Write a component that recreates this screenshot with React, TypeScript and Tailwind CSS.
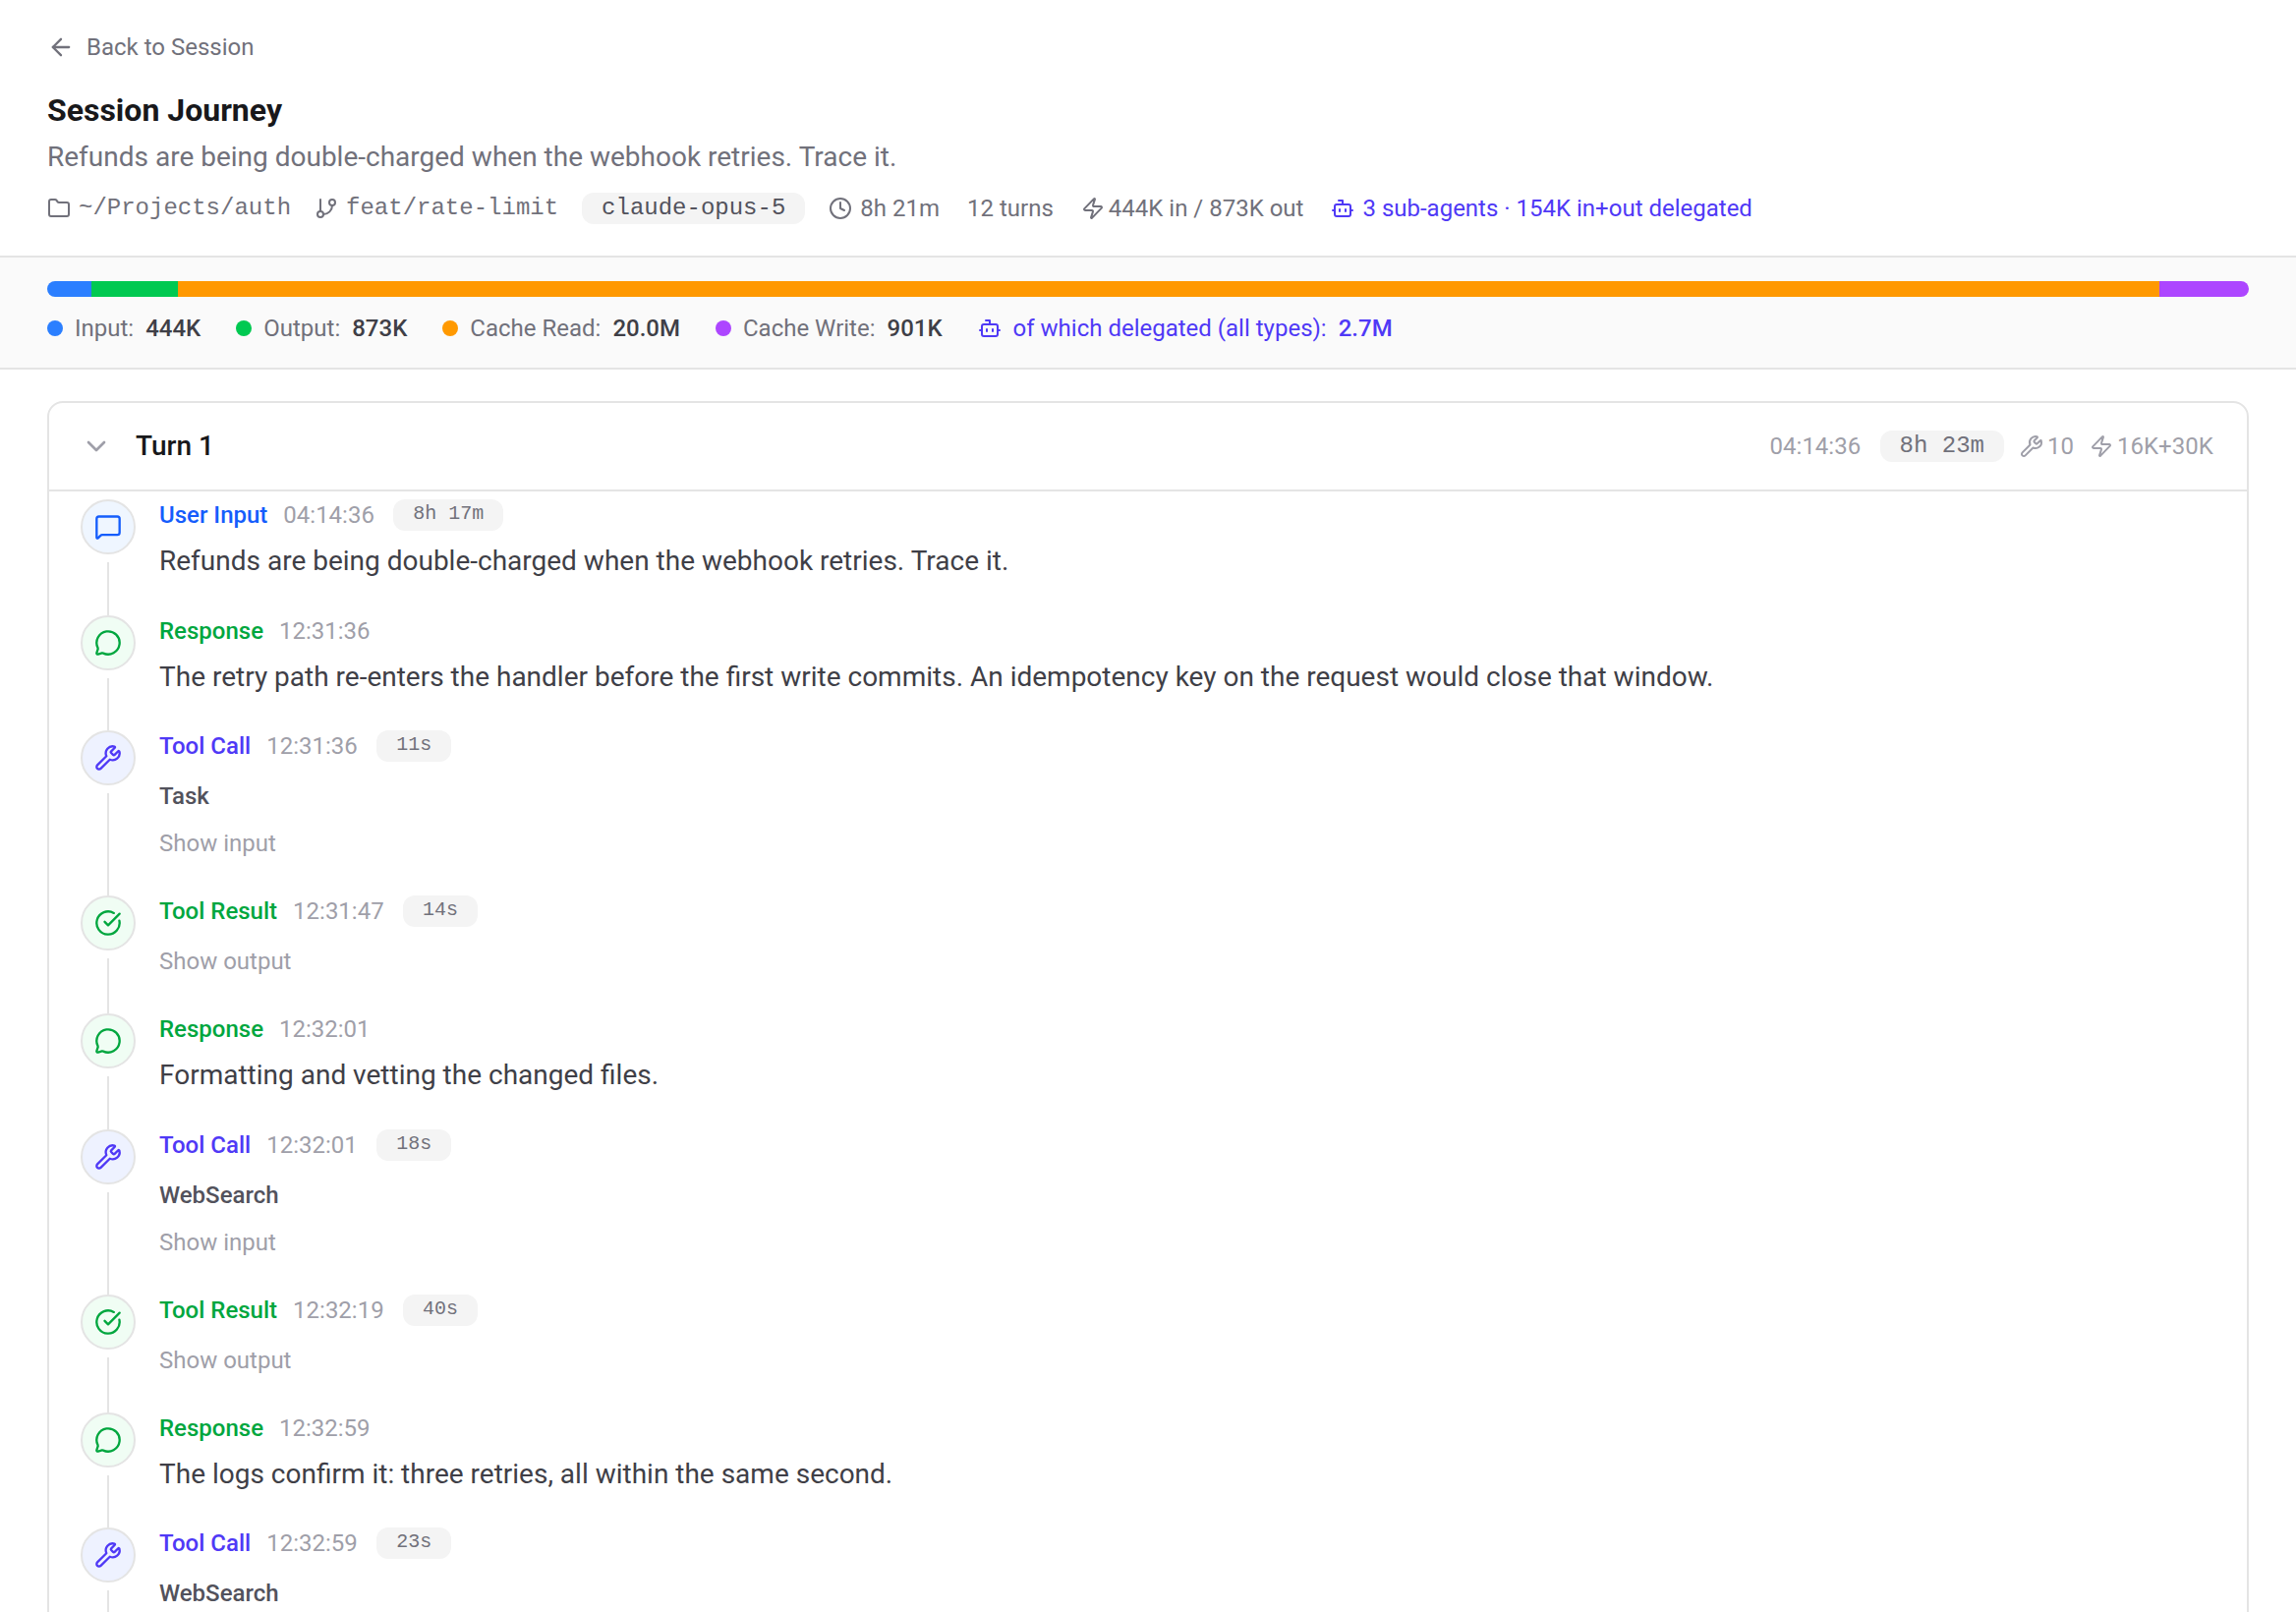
import {
  ArrowLeft,
  Bot,
  ChevronDown,
  CircleCheckBig,
  Clock,
  Folder,
  GitBranch,
  MessageCircle,
  MessageSquare,
  Wrench,
  Zap,
  type LucideIcon,
} from "lucide-react";
import type { ReactNode } from "react";

type EventKind = "user" | "response" | "call" | "result";

interface JourneyEvent {
  kind: EventKind;
  time: string;
  duration?: string;
  text?: string;
  tool?: string;
  toggle?: string;
}

const kinds: Record<
  EventKind,
  { label: string; icon: LucideIcon; color: string; bg: string }
> = {
  user: {
    label: "User Input",
    icon: MessageSquare,
    color: "text-blue-600",
    bg: "bg-blue-50",
  },
  response: {
    label: "Response",
    icon: MessageCircle,
    color: "text-green-600",
    bg: "bg-green-50",
  },
  call: {
    label: "Tool Call",
    icon: Wrench,
    color: "text-indigo-600",
    bg: "bg-indigo-50",
  },
  result: {
    label: "Tool Result",
    icon: CircleCheckBig,
    color: "text-green-600",
    bg: "bg-green-50",
  },
};

const events: JourneyEvent[] = [
  {
    kind: "user",
    time: "04:14:36",
    duration: "8h 17m",
    text: "Refunds are being double-charged when the webhook retries. Trace it.",
  },
  {
    kind: "response",
    time: "12:31:36",
    text: "The retry path re-enters the handler before the first write commits. An idempotency key on the request would close that window.",
  },
  {
    kind: "call",
    time: "12:31:36",
    duration: "11s",
    tool: "Task",
    toggle: "Show input",
  },
  {
    kind: "result",
    time: "12:31:47",
    duration: "14s",
    toggle: "Show output",
  },
  {
    kind: "response",
    time: "12:32:01",
    text: "Formatting and vetting the changed files.",
  },
  {
    kind: "call",
    time: "12:32:01",
    duration: "18s",
    tool: "WebSearch",
    toggle: "Show input",
  },
  {
    kind: "result",
    time: "12:32:19",
    duration: "40s",
    toggle: "Show output",
  },
  {
    kind: "response",
    time: "12:32:59",
    text: "The logs confirm it: three retries, all within the same second.",
  },
  { kind: "call", time: "12:32:59", duration: "23s", tool: "WebSearch" },
];

const tokens = [
  { label: "Input", value: "444K", amount: 444, color: "bg-blue-500" },
  { label: "Output", value: "873K", amount: 873, color: "bg-green-500" },
  { label: "Cache Read", value: "20.0M", amount: 20000, color: "bg-[#ff9900]" },
  { label: "Cache Write", value: "901K", amount: 901, color: "bg-purple-500" },
];

const totalTokens = tokens.reduce((sum, t) => sum + t.amount, 0);

const mono = "font-['Liberation_Mono',monospace]";

function Pill({ className, children }: { className: string; children: ReactNode }) {
  return (
    <span
      className={`h-8 rounded-xl bg-[#f4f4f4] px-5 whitespace-pre ${mono} ${className}`}
    >
      {children}
    </span>
  );
}

function Meta({ icon: Icon, children }: { icon: LucideIcon; children: ReactNode }) {
  return (
    <span className="flex items-center gap-2">
      <Icon size={24} />
      {children}
    </span>
  );
}

function EventRow({ event }: { event: JourneyEvent }) {
  const { label, icon: Icon, color, bg } = kinds[event.kind];

  return (
    <li className="flex gap-6">
      <div className="flex w-14 shrink-0 flex-col items-center">
        <div
          className={`flex size-14 shrink-0 items-center justify-center rounded-full border-2 border-[#e4e4e4] ${bg} ${color}`}
        >
          <Icon size={28} />
        </div>
        <div className="mt-2 w-0.5 flex-1 bg-[#e4e4e4]" />
      </div>
      <div className="min-w-0 flex-1 pb-8">
        <div className="flex items-center gap-4 text-2xl leading-8">
          <span className={`font-medium ${color}`}>{label}</span>
          <span className="min-w-24 text-zinc-400">{event.time}</span>
          {event.duration && (
            <Pill className="text-xl leading-[30px] text-zinc-500">
              {event.duration}
            </Pill>
          )}
        </div>
        <div className="mt-2">
          {event.text && (
            <p className="text-[28px] leading-relaxed text-zinc-700">
              {event.text}
            </p>
          )}
          {event.tool && (
            <div>
              <span className="text-2xl font-medium text-zinc-600">
                {event.tool}
              </span>
            </div>
          )}
          {event.toggle && (
            <div>
              <button type="button" className="text-2xl text-zinc-400">
                {event.toggle}
              </button>
            </div>
          )}
        </div>
      </div>
    </li>
  );
}

export default function App() {
  return (
    <div className="flex h-screen flex-col overflow-hidden bg-white font-[Roboto,sans-serif] text-[32px] leading-[48px] text-zinc-900">
      <header className="border-b-2 border-[#e4e4e4] px-12 py-8">
        <a
          href="#session"
          className="mb-6 flex w-fit items-center gap-3 text-2xl leading-8 text-zinc-500"
        >
          <ArrowLeft size={28} />
          Back to Session
        </a>
        <h1 className="font-bold">Session Journey</h1>
        <p className="mt-1 text-[28px] leading-10 text-zinc-500">
          Refunds are being double-charged when the webhook retries. Trace it.
        </p>
        <div className="mt-4 flex flex-wrap items-center gap-6 text-2xl leading-8 text-zinc-500">
          <Meta icon={Folder}>
            <span className={mono}>~/Projects/auth</span>
          </Meta>
          <Meta icon={GitBranch}>
            <span className={mono}>feat/rate-limit</span>
          </Meta>
          <Pill className="text-2xl leading-8 text-zinc-600">claude-opus-5</Pill>
          <div className="flex flex-wrap items-center gap-7">
            <Meta icon={Clock}>8h 21m</Meta>
            <span>12 turns</span>
            <span className="flex items-center gap-1">
              <Zap size={24} />
              444K in / 873K out
            </span>
            <span className="text-indigo-600">
              <Meta icon={Bot}>3 sub-agents · 154K in+out delegated</Meta>
            </span>
          </div>
        </div>
      </header>

      <section className="border-b-2 border-[#e4e4e4] bg-[#fafafa] px-12 py-6">
        <div className="flex h-4 overflow-hidden rounded-full">
          {tokens.map((t) => (
            <div
              key={t.label}
              className={t.color}
              style={{ width: `${(t.amount / totalTokens) * 100}%` }}
            />
          ))}
        </div>
        <div className="mt-4 flex flex-wrap items-center gap-9 text-2xl leading-8">
          {tokens.map((t) => (
            <div key={t.label} className="flex items-center gap-3">
              <span className={`size-4 rounded-full ${t.color}`} />
              <span className="text-zinc-500">{t.label}:</span>
              <span className="font-medium text-zinc-700">{t.value}</span>
            </div>
          ))}
          <div className="flex items-center gap-3 text-indigo-600">
            <Bot size={24} />
            <span>of which delegated (all types):</span>
            <span className="font-medium">2.7M</span>
          </div>
        </div>
      </section>

      <main className="min-h-0 flex-1 overflow-y-auto px-12 py-8 [scrollbar-width:none]">
        <section className="overflow-hidden rounded-2xl border-2 border-[#e4e4e4]">
          <button
            type="button"
            className="flex w-full items-center gap-6 border-b-2 border-[#e4e4e4] px-8 py-6"
          >
            <ChevronDown size={32} className="text-zinc-400" />
            <span className="text-[28px] leading-10 font-medium">Turn 1</span>
            <span className="ml-auto flex items-center gap-4 text-2xl leading-8 text-zinc-400">
              <span className="min-w-24 text-left">04:14:36</span>
              <Pill className="text-2xl leading-8 text-zinc-500">8h 23m</Pill>
              <span className="flex items-center gap-1">
                <Wrench size={24} />
                10
              </span>
              <span className="flex items-center gap-1">
                <Zap size={24} />
                <span className="min-w-25 text-left">16K+30K</span>
              </span>
            </span>
          </button>
          <ol className="px-8 pt-2">
            {events.map((event, i) => (
              <EventRow key={i} event={event} />
            ))}
          </ol>
        </section>
      </main>
    </div>
  );
}
